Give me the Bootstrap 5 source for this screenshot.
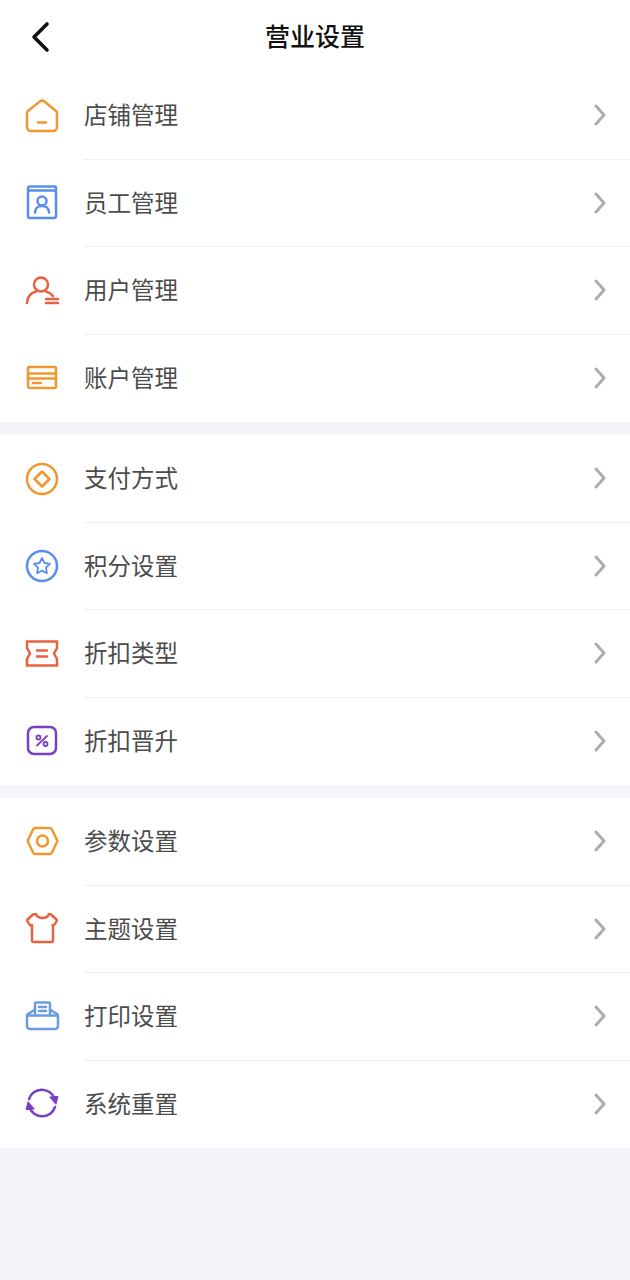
<!DOCTYPE html>
<html lang="zh-CN">
<head>
  <meta charset="UTF-8" />
  <meta name="viewport" content="width=device-width, initial-scale=1.0" />
  <title>营业设置</title>
  <link href="https://cdn.jsdelivr.net/npm/bootstrap@5.3.0/dist/css/bootstrap.min.css" rel="stylesheet" />
  <style>
    body {
      background-color: #f4f5f9;
      font-family: "Noto Sans CJK SC", "Liberation Sans", sans-serif;
      min-height: 1280px;
    }
    .top-bar {
      height: 72px;
      background: #fff;
    }
    .back-btn {
      left: 30px;
      top: 21px;
      line-height: 0;
    }
    .top-title {
      font-size: 25px;
      font-weight: 500;
      color: #111;
      margin: 0 0 2px;
    }
    .menu-group {
      margin-bottom: 13px;
      border-radius: 0;
      --bs-list-group-border-width: 0;
    }
    .menu-row {
      height: 87.5px;
      padding: 0 0 0 24px;
      gap: 24px;
      color: #4c4c4c;
    }
    .menu-ico {
      width: 36px;
      height: 36px;
      flex: none;
      fill: none;
      stroke-width: 2.5;
      stroke-linecap: round;
      stroke-linejoin: round;
    }
    .menu-body {
      height: 100%;
      padding-right: 24px;
      font-size: 23.5px;
      border-bottom: 1px solid #efeff2;
    }
    .menu-body span {
      margin-bottom: 1px;
    }
    .menu-row:last-child .menu-body {
      border-bottom: 0;
    }
    .menu-arrow {
      width: 12px;
      height: 22px;
      fill: none;
      stroke: #adadad;
      stroke-width: 3;
      stroke-linecap: round;
      stroke-linejoin: round;
    }
    .ic-orange { stroke: #ef982f; }
    .ic-blue { stroke: #5b8dee; }
    .ic-red { stroke: #e9623f; }
    .ic-purple { stroke: #7b3fc6; }
    .ic-sky { stroke: #6b9ae4; }
    .ic-head { fill: #7b3fc6; stroke-width: 1; }
  </style>
</head>
<body>
  <div class="top-bar position-relative d-flex align-items-center justify-content-center">
    <a class="back-btn position-absolute" href="#">
      <svg width="20" height="32" viewBox="0 0 20 32" fill="none" stroke="#111" stroke-width="3.6" stroke-linecap="round" stroke-linejoin="round"><path d="M17 3 4 16l13 13"/></svg>
    </a>
    <h1 class="top-title">营业设置</h1>
  </div>

  <div class="list-group list-group-flush menu-group">
    <div class="list-group-item menu-row d-flex align-items-center">
      <svg class="menu-ico ic-orange" viewBox="0 0 36 36"><path d="M4 13 15.500 3.600a4 4 0 0 1 5 0L32 13a3 3 0 0 1 1 2.400V29a4 4 0 0 1-4 4H7a4 4 0 0 1-4-4V15.400A3 3 0 0 1 4 13Z"/><path d="M14 24.500h8"/></svg>
      <div class="menu-body flex-grow-1 d-flex align-items-center justify-content-between"><span>店铺管理</span><svg class="menu-arrow" viewBox="0 0 12 22"><path d="M2 2l8 9-8 9"/></svg></div>
    </div>
    <div class="list-group-item menu-row d-flex align-items-center">
      <svg class="menu-ico ic-blue" viewBox="0 0 36 36"><path d="M4 5V3a1.500 1.500 0 0 1 1.500-1.500h25A1.500 1.500 0 0 1 32 3v2"/><rect x="4" y="5.500" width="28" height="27.500" rx="2"/><circle cx="18" cy="16" r="4.500"/><path d="M11 27.500c0-4 3-6.500 7-6.500s7 2.500 7 6.500"/></svg>
      <div class="menu-body flex-grow-1 d-flex align-items-center justify-content-between"><span>员工管理</span><svg class="menu-arrow" viewBox="0 0 12 22"><path d="M2 2l8 9-8 9"/></svg></div>
    </div>
    <div class="list-group-item menu-row d-flex align-items-center">
      <svg class="menu-ico ic-red" viewBox="0 0 36 36"><circle cx="17" cy="11.500" r="7"/><path d="M3 30c0-6 4-10.500 9-11.500M22 18.500c3 .8 5.500 2.500 7 4.500M22 26h12M22 30h12"/></svg>
      <div class="menu-body flex-grow-1 d-flex align-items-center justify-content-between"><span>用户管理</span><svg class="menu-arrow" viewBox="0 0 12 22"><path d="M2 2l8 9-8 9"/></svg></div>
    </div>
    <div class="list-group-item menu-row d-flex align-items-center">
      <svg class="menu-ico ic-orange" viewBox="0 0 36 36"><rect x="4" y="7" width="28" height="21" rx="1.500"/><path d="M4 13.500h28M4 18.500h28M9 23h8"/></svg>
      <div class="menu-body flex-grow-1 d-flex align-items-center justify-content-between"><span>账户管理</span><svg class="menu-arrow" viewBox="0 0 12 22"><path d="M2 2l8 9-8 9"/></svg></div>
    </div>
  </div>

  <div class="list-group list-group-flush menu-group">
    <div class="list-group-item menu-row d-flex align-items-center">
      <svg class="menu-ico ic-orange" viewBox="0 0 36 36"><circle cx="18" cy="18" r="15"/><path d="M18 10.500 25.500 18 18 25.500 10.500 18Z"/></svg>
      <div class="menu-body flex-grow-1 d-flex align-items-center justify-content-between"><span>支付方式</span><svg class="menu-arrow" viewBox="0 0 12 22"><path d="M2 2l8 9-8 9"/></svg></div>
    </div>
    <div class="list-group-item menu-row d-flex align-items-center">
      <svg class="menu-ico ic-blue" viewBox="0 0 36 36"><circle cx="18" cy="18" r="15"/><path stroke-width="1.800" d="m18 10 2.500 5 5.500.8-4 3.900.9 5.500-4.900-2.600-4.900 2.600.9-5.500-4-3.900 5.500-.8Z"/></svg>
      <div class="menu-body flex-grow-1 d-flex align-items-center justify-content-between"><span>积分设置</span><svg class="menu-arrow" viewBox="0 0 12 22"><path d="M2 2l8 9-8 9"/></svg></div>
    </div>
    <div class="list-group-item menu-row d-flex align-items-center">
      <svg class="menu-ico ic-red" viewBox="0 0 36 36"><path stroke-linejoin="miter" d="M3 5.500h30v6.500l-3 5.500 3 5.500v6.500H3V23l3-5.500L3 12Z"/><path d="M13 14.500h10M13 20.500h10"/></svg>
      <div class="menu-body flex-grow-1 d-flex align-items-center justify-content-between"><span>折扣类型</span><svg class="menu-arrow" viewBox="0 0 12 22"><path d="M2 2l8 9-8 9"/></svg></div>
    </div>
    <div class="list-group-item menu-row d-flex align-items-center">
      <svg class="menu-ico ic-purple" viewBox="0 0 36 36"><rect x="4" y="4" width="28" height="27" rx="6"/><circle cx="14.500" cy="14.500" r="2" stroke-width="1.800"/><circle cx="21.500" cy="21" r="2" stroke-width="1.800"/><path stroke-width="1.800" d="m23 13-10 9.500"/></svg>
      <div class="menu-body flex-grow-1 d-flex align-items-center justify-content-between"><span>折扣晋升</span><svg class="menu-arrow" viewBox="0 0 12 22"><path d="M2 2l8 9-8 9"/></svg></div>
    </div>
  </div>

  <div class="list-group list-group-flush menu-group">
    <div class="list-group-item menu-row d-flex align-items-center">
      <svg class="menu-ico ic-orange" viewBox="0 0 36 36"><path d="M11 4h15a2 2 0 0 1 1.700 1L33 16a2 2 0 0 1 0 2l-5.300 11a2 2 0 0 1-1.700 1H11a2 2 0 0 1-1.700-1L4 18a2 2 0 0 1 0-2L9.300 5A2 2 0 0 1 11 4Z"/><circle cx="18.500" cy="17" r="5.500"/></svg>
      <div class="menu-body flex-grow-1 d-flex align-items-center justify-content-between"><span>参数设置</span><svg class="menu-arrow" viewBox="0 0 12 22"><path d="M2 2l8 9-8 9"/></svg></div>
    </div>
    <div class="list-group-item menu-row d-flex align-items-center">
      <svg class="menu-ico ic-red" viewBox="0 0 36 36"><path d="M12 3c1 2.500 3.500 4 6.500 4s5.500-1.500 6.500-4l2 .5 5.500 5a1.200 1.200 0 0 1 .2 1.600l-2.700 4a1 1 0 0 1-1.500.2L29 14v15.500a1.500 1.500 0 0 1-1.500 1.500h-18A1.500 1.500 0 0 1 8 29.500V14l-.5.3a1 1 0 0 1-1.500-.2l-2.700-4a1.200 1.200 0 0 1 .2-1.600l5.500-5Z"/></svg>
      <div class="menu-body flex-grow-1 d-flex align-items-center justify-content-between"><span>主题设置</span><svg class="menu-arrow" viewBox="0 0 12 22"><path d="M2 2l8 9-8 9"/></svg></div>
    </div>
    <div class="list-group-item menu-row d-flex align-items-center">
      <svg class="menu-ico ic-sky" viewBox="0 0 36 36"><path d="M11 16.500V5a1.500 1.500 0 0 1 1.500-1.500h12A1.500 1.500 0 0 1 26 5v11.500"/><path d="M15 8h7M15 12h7"/><path d="M11 10.500 5 14.500a3 3 0 0 0-2 3V27a3 3 0 0 0 3 3h25a3 3 0 0 0 3-3v-9.500a3 3 0 0 0-2-3l-6-4"/><path d="M4 16.500h29"/></svg>
      <div class="menu-body flex-grow-1 d-flex align-items-center justify-content-between"><span>打印设置</span><svg class="menu-arrow" viewBox="0 0 12 22"><path d="M2 2l8 9-8 9"/></svg></div>
    </div>
    <div class="list-group-item menu-row d-flex align-items-center">
      <svg class="menu-ico ic-purple" viewBox="0 0 36 36"><path d="M5 13a13.500 13.500 0 0 1 25.500-.5"/><path d="M31 21a13.500 13.500 0 0 1-25.500.5"/><path class="ic-head" d="m26 11 8-.5-2 7.500Z"/><path class="ic-head" d="m10 23-8 .5 2-7.500Z"/></svg>
      <div class="menu-body flex-grow-1 d-flex align-items-center justify-content-between"><span>系统重置</span><svg class="menu-arrow" viewBox="0 0 12 22"><path d="M2 2l8 9-8 9"/></svg></div>
    </div>
  </div>

  <script src="https://cdn.jsdelivr.net/npm/bootstrap@5.3.0/dist/js/bootstrap.bundle.min.js"></script>
</body>
</html>
